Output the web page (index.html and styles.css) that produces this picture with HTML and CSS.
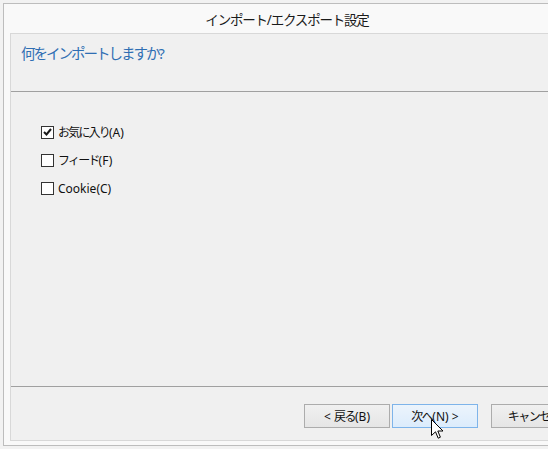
FILE: index.html
```html
<!DOCTYPE html>
<html lang="ja">
<head>
    <meta charset="utf-8" />
    <title>インポート/エクスポート設定</title>
    <link rel="stylesheet" href="styles.css">
</head>
<body>
    <div id="desktop">
        <div id="window">
            <div class="titlebar">インポート/エクスポート設定</div>
            <div class="client">
                <div class="header">何をインポートしますか?</div>

                <div class="content">
                    <label class="option">
                        <span class="box checked">
                            <svg width="9" height="8" viewBox="0 0 9 8"><path d="M1 4 L3.5 6.5 L8 1" fill="none" stroke="#1a1a1a" stroke-width="2"/></svg>
                        </span>
                        お気に入り<span class="key">(A)</span>
                    </label>
                    <label class="option">
                        <span class="box"></span>
                        フィード<span class="key">(F)</span>
                    </label>
                    <label class="option">
                        <span class="box"></span>
                        <span class="key">Cookie(C)</span>
                    </label>
                </div>

                <div class="footer">
                    <button class="btn"><span class="key">&lt; </span>戻る<span class="key">(B)</span></button>
                    <button class="btn hover">次へ<span class="key">(N) &gt;</span></button>
                    <button class="btn cancel">キャンセル</button>
                </div>
            </div>
        </div>

        <!-- mouse pointer over the next button -->
        <svg class="cursor" width="13" height="21" viewBox="0 0 13 21">
            <path d="M0.5 0.5 L0.5 16.5 L4.5 12.8 L7.2 19.2 L9.4 18.2 L6.8 12 L12 12 Z" fill="#fff" stroke="#000" stroke-width="1" stroke-linejoin="miter"/>
        </svg>
    </div>
</body>
</html>
```

FILE: styles.css
```css
body {
    margin: 0;
    background: #f2f2f2;
    font-family: "Noto Sans", "Noto Sans CJK JP", sans-serif;
    overflow: hidden;
}

#desktop {
    position: relative;
    width: 548px;
    height: 449px;
    overflow: hidden;
}

#window {
    margin: 3px 0 0 3px;
    width: 566px;
    height: 441px;
    border: 1px solid #bdbdbd;
    background: #f9f9f9;
    display: flex;
    flex-direction: column;
}

.titlebar {
    height: 29px;
    display: flex;
    align-items: center;
    justify-content: center;
    font-size: 13.5px;
    letter-spacing: -1.2px;
    color: #1b1b1b;
}

.client {
    flex: 1;
    margin: 0 6px 4px 6px;
    border: 1px solid #d8d8d8;
    background: #f0f0f0;
    display: flex;
    flex-direction: column;
}

.header {
    height: 58px;
    box-sizing: border-box;
    padding: 8px 10px;
    border-bottom: 1px solid #a0a0a0;
    font-size: 14.5px;
    letter-spacing: -2px;
    color: #2f6eb3;
}

.content {
    flex: 1;
    padding: 26px 30px 0 30px;
}

.option {
    height: 28px;
    display: flex;
    align-items: center;
    font-size: 12px;
    letter-spacing: -1.8px;
    color: #111;
}

.key {
    letter-spacing: 0;
}

.box {
    width: 11px;
    height: 11px;
    border: 1px solid #333;
    background: #fff;
    margin-right: 4px;
    display: flex;
    align-items: center;
    justify-content: center;
}

.footer {
    height: 54px;
    box-sizing: border-box;
    border-top: 1px solid #a0a0a0;
    padding: 17px 0 0 293px;
    display: flex;
    align-items: flex-start;
}

.btn {
    width: 86px;
    height: 24px;
    margin-right: 2px;
    padding: 0;
    border: 1px solid #acacac;
    background: linear-gradient(#f0f0f0, #e5e5e5);
    font-family: "Noto Sans", "Noto Sans CJK JP", sans-serif;
    font-size: 12px;
    letter-spacing: -1.5px;
    color: #111;
    flex: none;
    white-space: pre;
}

.btn.hover {
    border-color: #7eb4ea;
    background: linear-gradient(#ecf4fc, #dcecfc);
    margin-right: 13px;
}

.cursor {
    position: absolute;
    left: 431px;
    top: 419px;
}
```
